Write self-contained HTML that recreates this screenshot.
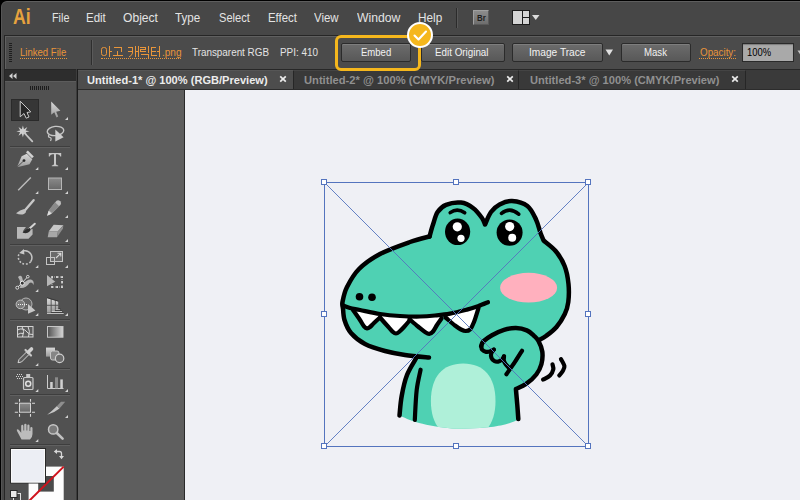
<!DOCTYPE html>
<html><head><meta charset="utf-8">
<style>
*{margin:0;padding:0;box-sizing:border-box}
html,body{width:800px;height:500px;overflow:hidden;background:#000}
body{font-family:"Liberation Sans",sans-serif;position:relative}
.a{position:absolute}
.t{position:absolute;white-space:nowrap;line-height:normal;transform-origin:0 0;display:block}
#win{position:absolute;left:1px;top:1px;width:799px;height:499px;background:#474747;border-top-left-radius:6px;border-top:1px solid #5e5e5e;border-left:1px solid #555}
#ctrl{position:absolute;left:4px;top:35px;width:796px;height:35px;background:#4b4b4b;border-top:1px solid #262626;border-left:1px solid #262626;box-shadow:inset 1px 1px 0 #606060}
.btn{position:absolute;top:43px;height:19px;border:1px solid #2b2b2b;border-radius:2px;background:linear-gradient(#6c6c6c,#585858);box-shadow:inset 0 1px 0 #7e7e7e}
.dot{position:absolute;height:0;border-top:1px dotted #e8953a}
#tabs{position:absolute;left:78px;top:69px;width:722px;height:21px;background:#3a3a3a;border-top:1px solid #272727;border-bottom:1px solid #2c2c2c}
.tab{position:absolute;top:70px;height:19px;border-right:1px solid #262626;background:#393939;border-top:1px solid #444}
#tools{position:absolute;left:4px;top:69px;width:72px;height:431px;background:#515151;border-left:1px solid #262626;border-top:1px solid #262626}
#thead{position:absolute;left:5px;top:70px;width:71px;height:12px;background:#2d2d2d;border-bottom:1px solid #5c5c5c}
#gutter{position:absolute;left:76px;top:69px;width:2px;height:431px;background:#3c3c3c;border-right:1px solid #1c1c1c}
#paste{position:absolute;left:78px;top:90px;width:107px;height:410px;background:#5e5e5e}
#art{position:absolute;left:184px;top:90px;width:616px;height:410px;background:#eff0f5;border-left:1px solid #2a2a2a}
.sep{position:absolute;left:10px;width:60px;height:2px;border-top:1px solid #3c3c3c;border-bottom:1px solid #626262}
.tri{position:absolute;width:0;height:0;border-left:3px solid transparent;border-top:3px solid transparent;border-right:0;border-bottom:0}
</style></head><body>
<div id="win"></div>
<!-- menu bar right icons -->
<div class="a" style="left:456px;top:8px;width:2px;height:20px;border-left:1px solid #2b2b2b;border-right:1px solid #585858"></div>
<div class="a" style="left:473px;top:10px;width:16px;height:15px;background:linear-gradient(#8c8c8c,#6e6e6e);border:1px solid #a0a0a0;border-right-color:#5a5a5a;border-bottom-color:#5a5a5a"></div>
<div class="a" style="left:512px;top:10px;width:18px;height:15px;background:#d4d4d4;border:1px solid #1c1c1c"></div>
<div class="a" style="left:522px;top:11px;width:1px;height:13px;background:#1c1c1c"></div>
<div class="a" style="left:523px;top:17px;width:6px;height:1px;background:#1c1c1c"></div>
<svg class="a" style="left:532px;top:15px" width="8" height="5"><path d="M0 0H7.5L3.75 5Z" fill="#dcdcdc"/></svg>

<div id="ctrl"></div>
<!-- gripper -->
<div class="a" style="left:9px;top:43px;width:3px;height:20px;background:repeating-linear-gradient(#1e1e1e 0 1px,transparent 1px 2px)"></div>
<div class="a" style="left:91px;top:40px;width:2px;height:25px;border-left:1px solid #2e2e2e;border-right:1px solid #5a5a5a"></div>
<div class="dot" style="left:20px;top:58px;width:47px"></div>
<div class="dot" style="left:101px;top:58px;width:80px"></div>
<div class="dot" style="left:699px;top:58px;width:37px"></div>
<!-- korean filename glyphs -->
<svg class="a" style="left:100px;top:45px" width="62" height="14" viewBox="100 45 62 14" shape-rendering="crispEdges" fill="none" stroke="#e8953a" stroke-width="1">
<rect x="101.5" y="47.5" width="5" height="8" rx="2" shape-rendering="auto"/>
<path d="M109.5 46V57M110 51.5H112"/>
<path d="M114 47.5H121.5V52M117.5 51V55.5M113 55.5H123"/>
<path d="M128 47.5H132.5V53M128 51.5H132.5M135.5 46V57M138.5 46V57M135.5 51.5H138.5"/>
<path d="M132.5 53Q132 55.5 129 57" shape-rendering="auto"/>
<path d="M140 47.5H145.5V49.5H140.5V51.5H146M148.5 46V53M141 54.5H148.5V58"/>
<path d="M156 47.5H151.5V55.5H156.5M151.5 51.5H156M159.5 46V57M157 51.5H159.5"/>
</svg>
<!-- buttons -->
<div class="btn" style="left:341px;width:70px"></div>
<div class="btn" style="left:421px;width:84px"></div>
<div class="btn" style="left:512px;width:91px"></div>
<div class="btn" style="left:621px;width:70px"></div>
<svg class="a" style="left:605px;top:49px" width="9" height="7"><path d="M0.5 0.5H8L4.25 6.5Z" fill="#e0e0e0"/></svg>
<div class="a" style="left:742px;top:43px;width:52px;height:19px;background:#a9a9a9;border:1px solid #2a2a2a;box-shadow:inset 0 1px 1px #7c7c7c"></div>
<svg class="a" style="left:797px;top:50px" width="3" height="6"><path d="M0.500 0.500H8L4.250 6Z" fill="#c4c4c4"/></svg>

<!-- tabs -->
<div id="tabs"></div>
<div class="tab" style="left:78px;width:216px;background:#4d4d4d;border-top-color:#565656"></div>
<div class="tab" style="left:294px;width:225px"></div>
<div class="tab" style="left:519px;width:227px"></div>
<svg class="a" style="left:279px;top:75px" width="9" height="9"><path d="M1.200 1.400L6.800 6.600M6.800 1.400L1.200 6.600" stroke="#ececec" stroke-width="1.700"/></svg>
<svg class="a" style="left:505.500px;top:75px" width="9" height="9"><path d="M1.200 1.400L6.800 6.600M6.800 1.400L1.200 6.600" stroke="#ececec" stroke-width="1.700"/></svg>
<svg class="a" style="left:731px;top:75px" width="9" height="9"><path d="M1.200 1.400L6.800 6.600M6.800 1.400L1.200 6.600" stroke="#ececec" stroke-width="1.700"/></svg>

<!-- highlight -->
<div class="a" style="left:335px;top:35px;width:85.500px;height:36px;border:3px solid #f5b71d;border-radius:6px"></div>
<div class="a" style="left:407px;top:22px;width:26px;height:26px;border-radius:50%;background:#f5b71d;border:2px solid #fff"></div>
<svg class="a" style="left:407px;top:22px" width="26" height="26"><path d="M7.5 13.5L11.5 17.5L19 9.5" fill="none" stroke="#fff" stroke-width="2.1" stroke-linecap="round" stroke-linejoin="round"/></svg>
<div id="tools"></div>
<div id="thead"></div>
<div id="gutter"></div>
<div id="paste"></div>
<div id="art"></div>
<svg class="a" style="left:0;top:0" width="800" height="500" viewBox="0 0 800 500">
<defs>
<linearGradient id="gv" x1="0" y1="0" x2="0" y2="1"><stop offset="0" stop-color="#8a8a8a"/><stop offset="1" stop-color="#686868"/></linearGradient>
<linearGradient id="gl" x1="0" y1="0" x2="0" y2="1"><stop offset="0" stop-color="#d8d8d8"/><stop offset="1" stop-color="#9c9c9c"/></linearGradient>
<linearGradient id="gh" x1="0" y1="0" x2="1" y2="0"><stop offset="0" stop-color="#505050"/><stop offset="1" stop-color="#d6d6d6"/></linearGradient>
</defs>
<!-- header arrows + gripper -->
<path d="M12.5 73L9 76L12.5 79ZM16.5 73L13 76L16.5 79Z" fill="#d0d0d0"/>
<path d="M30.5 86V90M32.5 86V90M34.5 86V90M36.5 86V90M38.5 86V90M40.5 86V90M42.5 86V90M44.5 86V90M46.5 86V90M48.5 86V90" stroke="#1c1c1c" stroke-width="1" shape-rendering="crispEdges"/>
<!-- selected tool bg -->
<rect x="11.5" y="99.500" width="27" height="21" fill="#363636" stroke="#2a2a2a"/>
<!-- corner triangles -->
<g fill="#d2d2d2">
<path d="M68 117V120H65Z"/>
<path d="M38.300 167V170H35.300Z"/><path d="M68 167V170H65Z"/>
<path d="M38.300 191V194H35.300Z"/><path d="M68 191V194H65Z"/>
<path d="M68 215V218H65Z"/>
<path d="M68 239V242H65Z"/>
<path d="M38.300 265V268H35.300Z"/><path d="M68 265V268H65Z"/>
<path d="M38.300 289V292H35.300Z"/>
<path d="M38.300 313V316H35.300Z"/><path d="M68 313V316H65Z"/>
<path d="M38.300 363V366H35.300Z"/>
<path d="M38.300 389V392H35.300Z"/><path d="M68 389V392H65Z"/>
<path d="M68 415V418H65Z"/>
<path d="M38.300 439V442H35.300Z"/>
</g>
<!-- separators -->
<g shape-rendering="crispEdges">
<path d="M10 146.500H70M10 244.500H70M10 319.500H70M10 368.500H70M10 394.500H70M10 444.500H70" stroke="#3e3e3e"/>
<path d="M10 147.500H70M10 245.500H70M10 320.500H70M10 369.500H70M10 395.500H70M10 445.500H70" stroke="#606060"/>
</g>
<!-- selection arrow -->
<path d="M20.200 101.200V116.800L24 113.500L26.200 118.200L29 117L27 112.500L30.800 111.800Z" fill="#262626" stroke="#cacaca" stroke-width="1" stroke-linejoin="miter"/>
<!-- direct selection -->
<path d="M51.200 101.600V114.800L54.300 112.300L56.500 117.400L58.200 116.600L56.200 111.700L60.400 110.800Z" fill="url(#gl)"/>
<!-- magic wand -->
<path d="M22.900 125.500L24 129.300L27.300 127L25.600 130.500L29.500 131.300L25.700 132.300L27.300 135.800L24 133.500L22.900 137.200L21.800 133.500L18.500 135.800L20.100 132.300L16.300 131.300L20.200 130.500L18.500 127L21.800 129.300Z" fill="#cfcfcf"/>
<path d="M24 132.500L32.300 141.300" stroke="#c4c4c4" stroke-width="1.800" stroke-linecap="round"/>
<!-- lasso -->
<ellipse cx="55.500" cy="131" rx="8.300" ry="4.600" fill="none" stroke="#c6c6c6" stroke-width="1.400" transform="rotate(-6 55.500 131)"/>
<path d="M49 134.500Q47.500 137 50 137.500Q52 138 50.500 141" fill="none" stroke="#c6c6c6" stroke-width="1.200"/>
<path d="M55.300 129.500V141.500L63.600 137.200Z" fill="#cdcdcd"/>
<!-- pen -->
<path d="M17 167.200L21.600 156.200L26.800 153.800L32.300 159.200L29.500 164.300Z" fill="url(#gl)"/>
<path d="M17 167.200L23.500 161" stroke="#3a3a3a" stroke-width="0.800"/>
<circle cx="24" cy="160.600" r="1.400" fill="#2a2a2a"/>
<path d="M27.800 150.400L33.800 156.400L32 158.300L26 152.200Z" fill="#d2d2d2"/>
<!-- type T -->
<path d="M48.800 153H61.200V156.600H60.300Q60 154.400 57.500 154.300H56V164Q56 165.300 58.200 165.400V166.300H51.800V165.400Q54 165.300 54 164V154.300H52.500Q50 154.400 49.700 156.600H48.800Z" fill="#c6c6c6"/>
<!-- line -->
<path d="M18.200 190.200L30.800 177.400" stroke="#bcbcbc" stroke-width="1.400"/>
<!-- rect -->
<rect x="48.500" y="178" width="13" height="11.500" fill="url(#gv)" stroke="#b6b6b6" stroke-width="1"/>
<!-- brush -->
<path d="M33.600 200.200L24.800 210.500" stroke="#c8c8c8" stroke-width="2.400" stroke-linecap="round"/>
<path d="M24.200 209Q20 210 16 213.300Q20.500 215.500 24 214Q26.500 212.500 26 210.500Z" fill="#c2c2c2"/>
<!-- pencil -->
<path d="M56.500 200.700Q58.500 199.500 60.300 201.300Q61.800 203 60.600 204.800L51.500 213.800L47.200 215.700L48.500 211Z" fill="#bdbdbd"/>
<path d="M55 202.300L59.200 206.300L52.200 213.200L48.700 210.200Z" fill="#8a8a8a"/>
<path d="M47.200 215.700L48.500 211L51.500 213.800Z" fill="#dedede"/>
<!-- blob brush -->
<path d="M17 227H26L24 229.500Q22 232.500 24.500 233Q28 233 30.500 229.500L32.600 229V234.500L28.500 238.800H17Z" fill="#b8b8b8"/>
<path d="M34.800 223.700L28.500 229.500" stroke="#d4d4d4" stroke-width="2" stroke-linecap="round"/>
<path d="M29.500 228Q26 228.500 22.500 232.500Q26.500 234 29 232Q31 230.500 30.500 228.800Z" fill="#2e2e2e"/>
<!-- eraser -->
<path d="M53.700 224.800L63.400 225.300L58 231.300H48.800Z" fill="#c6c6c6"/>
<path d="M48.800 231.300H58L57 237.200H47.700Z" fill="#a8a8a8"/>
<path d="M58 231.300L63.400 225.300L62.900 228.800L57 237.200Z" fill="#8e8e8e"/>
<!-- rotate -->
<path d="M23.7 250.8A7.0 7.0 0 0 1 30.6 261.7" fill="none" stroke="#c4c4c4" stroke-width="1.500"/>
<path d="M30.6 261.7A7.0 7.0 0 0 1 19.2 253.7" fill="none" stroke="#c4c4c4" stroke-width="1.500" stroke-dasharray="1.800 1.700"/>
<path d="M19.200 252.900L23.900 249L24.400 254.400Z" fill="#c8c8c8"/>
<!-- scale -->
<rect x="50.500" y="251.500" width="12" height="10" fill="#6a6a6a" stroke="#c4c4c4"/>
<rect x="46.500" y="257.500" width="8" height="7" fill="none" stroke="#c4c4c4"/>
<path d="M56 258L60.500 253.600M57.500 253.300H60.800V256.600" fill="none" stroke="#d8d8d8" stroke-width="1.100"/>
<!-- warp / width -->
<path d="M18 277Q20.500 274.500 22 277Q23.500 281 23 284Q27 279 31 279.500Q34.500 280.500 33.500 285Q32 281.500 29.500 283Q26 288.500 20 288Q21.500 282.500 18 277Z" fill="#b4b4b4"/>
<path d="M17.300 287.700L28 276.500" stroke="#e0e0e0" stroke-width="1"/>
<circle cx="17.300" cy="287.700" r="1.500" fill="#444" stroke="#e6e6e6" stroke-width="0.900"/>
<circle cx="22.300" cy="283.200" r="2" fill="#333" stroke="#ececec" stroke-width="1"/>
<circle cx="27.800" cy="276.700" r="1.300" fill="#444" stroke="#e6e6e6" stroke-width="0.900"/>
<!-- free transform -->
<rect x="52" y="277" width="10" height="10" fill="none" stroke="#b8b8b8" stroke-width="1" stroke-dasharray="1 1"/>
<g fill="#ececec"><rect x="51.200" y="276.200" width="1.700" height="1.700"/><rect x="56.200" y="276.200" width="1.700" height="1.700"/><rect x="61.200" y="276.200" width="1.700" height="1.700"/><rect x="61.200" y="281.200" width="1.700" height="1.700"/><rect x="51.200" y="286.200" width="1.700" height="1.700"/><rect x="56.200" y="286.200" width="1.700" height="1.700"/><rect x="61.200" y="286.200" width="1.700" height="1.700"/></g>
<path d="M47 275V286.200L55.300 281.800Z" fill="#b6b6b6"/>
<!-- shape builder -->
<circle cx="26" cy="304" r="6" fill="#666" stroke="#b4b4b4" stroke-width="1"/>
<circle cx="20.400" cy="304.400" r="4.300" fill="#7a7a7a" stroke="#c0c0c0" stroke-width="1"/>
<path d="M18 304.500H27" stroke="#f0f0f0" stroke-width="1.200" stroke-dasharray="1 1"/>
<path d="M28 304V313.800L35.400 310.400Z" fill="#c8c8c8"/>
<!-- perspective grid -->
<path d="M47 298L50.700 299.200V312.500H47Z" fill="url(#gl)"/>
<path d="M51.600 299.500L54.900 300.500V311H51.600Z" fill="url(#gl)"/>
<path d="M55.700 300.800L58.200 301.600V309.300H55.700Z" fill="url(#gl)"/>
<path d="M46.500 305.300H58.500" stroke="#4c4c4c" stroke-width="0.900"/>
<path d="M47 297.700L58.500 301.200" stroke="#2e2e2e" stroke-width="0.800"/>
<path d="M55.700 309.700H60M51.600 311.500H62M47 313.400H63.700" stroke="#cdcdcd" stroke-width="1"/>
<path d="M58.500 308.700H60.500M55 310.600H62.300M51 312.500H63.700" stroke="#333" stroke-width="0.700"/>
<!-- mesh -->
<rect x="17.500" y="326.500" width="15.500" height="10.500" fill="#5c5c5c" stroke="#d2d2d2" stroke-width="1"/>
<path d="M17.500 330Q23 327 27 332Q29 335 33 334.500M22 326.500Q25 331 22.500 337M28 326.500Q30.500 331 28.500 337M17.500 334.500Q21 332.500 23.500 333.500" fill="none" stroke="#dadada" stroke-width="1"/>
<!-- gradient -->
<rect x="47.500" y="326.500" width="15.500" height="10.700" fill="url(#gh)" stroke="#c6c6c6" stroke-width="1"/>
<!-- eyedropper -->
<path d="M18 362.700L19 359.500L26.500 352L29 354.500L21.500 362Z" fill="#5a5a5a" stroke="#d4d4d4" stroke-width="1"/>
<path d="M25.500 350L31 355.500" stroke="#c8c8c8" stroke-width="2.200" stroke-linecap="round"/>
<path d="M28.500 352L31.500 349" stroke="#d0d0d0" stroke-width="3.600" stroke-linecap="round"/>
<!-- blend -->
<rect x="46" y="347.600" width="9" height="9" fill="url(#gl)"/>
<rect x="50.500" y="351" width="8.500" height="9" rx="2" fill="#868686" stroke="#c8c8c8" stroke-width="1"/>
<circle cx="59.600" cy="358.400" r="4.200" fill="#6c6c6c" stroke="#cecece" stroke-width="1.200"/>
<!-- symbol sprayer -->
<rect x="23.500" y="377.500" width="9.500" height="12" rx="1" fill="#5e5e5e" stroke="#c8c8c8" stroke-width="1.200"/>
<rect x="26.200" y="374" width="4" height="3" fill="#c8c8c8"/>
<circle cx="28.200" cy="383.800" r="2.500" fill="none" stroke="#e0e0e0" stroke-width="1.500"/>
<path d="M17 374.500H23M16 376.500H23M17 378.500H22" stroke="#d4d4d4" stroke-width="1" stroke-dasharray="1 1" shape-rendering="crispEdges"/>
<!-- graph -->
<path d="M47.500 375V388.500H63.500" fill="none" stroke="#cccccc" stroke-width="1"/>
<rect x="50.200" y="382" width="2.500" height="6" fill="#d0d0d0"/>
<rect x="55" y="377.300" width="3" height="11" fill="#8a8a8a"/>
<rect x="60.300" y="379.400" width="2.500" height="9" fill="#d0d0d0"/>
<!-- artboard -->
<rect x="19.500" y="403.200" width="11" height="9" fill="url(#gv)" stroke="#d4d4d4" stroke-width="1"/>
<path d="M19.500 399V401.800M30.500 399V401.800M19.500 414V416.800M30.500 414V416.800M14.800 403.200H18M14.800 412.200H18M32 403.200H35M32 412.200H35" stroke="#d8d8d8" stroke-width="1.100"/>
<!-- slice -->
<path d="M47.200 414.800Q52 411 57 406L59.500 408.500Q54 413 47.200 414.800Z" fill="#c6c6c6"/>
<path d="M57 406L61 401.800H65.200L59.500 408.500Z" fill="#8e8e8e"/>
<!-- hand -->
<path d="M21.500 439.500L17 431Q16.300 429.500 17.500 429.300Q18.700 429.300 19.800 431L21.200 432.800V426Q21.300 424.800 22.300 424.800Q23.300 424.800 23.400 426V430.500H24.200V424.800Q24.300 423.800 25.300 423.800Q26.400 423.800 26.500 424.800V430.500H27.300V425.600Q27.400 424.600 28.400 424.600Q29.400 424.600 29.500 425.600V431H30.300V428Q30.400 427 31.400 427Q32.400 427 32.500 428V434Q32.500 437 30 439.500Z" fill="#bcbcbc"/>
<!-- zoom -->
<circle cx="53.200" cy="429.400" r="4.700" fill="#7a7a7a" stroke="#c6c6c6" stroke-width="1.500"/>
<path d="M56.800 433L62.600 438.600" stroke="#c2c2c2" stroke-width="2.600" stroke-linecap="round"/>
<!-- swap arrows -->
<path d="M56 451.500H59.500Q61.500 451.500 61.500 453.500V456.500" fill="none" stroke="#d6d6d6" stroke-width="1.300"/>
<path d="M53.800 451.500L57 449V454ZM61.500 459.300L59 456H64Z" fill="#d6d6d6"/>
<!-- stroke box -->
<rect x="28.600" y="466.600" width="35.100" height="40" fill="#fdfdfd"/>
<rect x="38.200" y="476" width="15.600" height="15.600" fill="#4a4a4a"/>
<path d="M63.700 466.600L26 504" stroke="#d0121c" stroke-width="2"/>
<!-- fill box -->
<rect x="10.500" y="448.500" width="35" height="34.500" fill="#eceef4" stroke="#2a2a2a" stroke-width="1"/>
<rect x="11.500" y="449.500" width="33" height="32.500" fill="none" stroke="#fafafa" stroke-width="1"/>
<!-- default fill/stroke mini -->
<rect x="13.500" y="493.500" width="7" height="8" fill="#4a4a4a" stroke="#e0e0e0" stroke-width="1"/>
<rect x="10.500" y="490.500" width="6.500" height="7" fill="#e8e8e8" stroke="#2a2a2a" stroke-width="1"/>
</svg>

<svg class="a" style="left:0;top:0" width="800" height="500" viewBox="0 0 800 500">
<path d="M429.5 236.5C430.1 234.5 431.6 228.6 433.0 224.5C434.4 220.4 435.4 215.3 437.6 212.0C439.8 208.7 442.1 206.4 446.0 204.8C449.9 203.2 456.5 202.1 461.0 202.6C465.5 203.1 469.5 205.4 473.0 208.0C476.5 210.6 480.0 215.2 482.0 218.0C484.0 220.8 484.5 223.4 485.0 224.5C486.0 222.4 488.6 215.3 491.0 212.0C493.4 208.7 496.1 206.2 499.6 204.4C503.1 202.6 507.4 200.7 512.0 201.0C516.6 201.3 523.4 202.9 527.4 206.0C531.4 209.1 533.8 215.0 536.0 219.5C538.2 224.0 539.2 229.5 540.5 233.0C541.8 236.5 543.1 239.2 543.6 240.5C545.6 242.2 552.1 246.8 555.6 251.0C559.1 255.2 562.5 260.5 564.6 266.0C566.8 271.5 567.9 278.0 568.5 284.0C569.1 290.0 568.9 297.0 568.3 302.0C567.7 307.0 566.8 309.8 564.8 314.0C562.8 318.2 559.6 323.3 556.5 327.0C553.4 330.7 548.8 333.9 546.0 336.0C543.2 338.1 540.8 339.1 539.7 339.7L538 340.500C539.1 342.8 541.8 347.7 542.3 351.6C542.8 355.5 542.4 360.5 541.4 364.3C540.4 368.1 538.8 371.2 536.3 374.5C533.8 377.8 529.5 381.5 526.1 383.9C522.7 386.3 517.6 388.1 515.9 389.0C516.1 391.7 516.9 400.0 517.3 405.0C517.7 410.0 518.1 416.7 518.3 419.0C516.1 420.8 510.6 423.2 505.0 424.5C499.4 425.8 493.8 426.9 485.0 427.6C476.2 428.3 463.0 429.3 452.0 428.5C441.0 427.7 427.8 425.2 419.0 423.0C410.2 420.8 402.8 416.8 399.5 415.5C399.9 412.2 400.4 402.8 401.7 396.0C402.9 389.2 404.6 381.2 407.0 375.0C409.4 368.8 414.5 361.2 416.0 358.5L429 357.600C425.0 357.2 412.3 356.1 405.0 355.0C397.7 353.9 391.7 352.8 385.0 351.0C378.3 349.2 370.7 347.0 365.0 344.0C359.3 341.0 354.4 337.0 351.0 333.0C347.6 329.0 345.8 324.2 344.5 320.0C343.2 315.8 343.2 310.0 343.0 308.0C342.9 307.0 341.8 305.5 342.5 302.0C343.2 298.5 344.2 292.5 347.0 287.0C349.8 281.5 353.5 274.5 359.0 269.0C364.5 263.5 371.5 258.5 380.0 254.0C388.5 249.5 401.8 244.9 410.0 242.0C418.2 239.1 426.2 237.4 429.5 236.5Z" fill="#4fd1b3"/>
<clipPath id="bc"><path d="M429.5 236.5C430.1 234.5 431.6 228.6 433.0 224.5C434.4 220.4 435.4 215.3 437.6 212.0C439.8 208.7 442.1 206.4 446.0 204.8C449.9 203.2 456.5 202.1 461.0 202.6C465.5 203.1 469.5 205.4 473.0 208.0C476.5 210.6 480.0 215.2 482.0 218.0C484.0 220.8 484.5 223.4 485.0 224.5C486.0 222.4 488.6 215.3 491.0 212.0C493.4 208.7 496.1 206.2 499.6 204.4C503.1 202.6 507.4 200.7 512.0 201.0C516.6 201.3 523.4 202.9 527.4 206.0C531.4 209.1 533.8 215.0 536.0 219.5C538.2 224.0 539.2 229.5 540.5 233.0C541.8 236.5 543.1 239.2 543.6 240.5C545.6 242.2 552.1 246.8 555.6 251.0C559.1 255.2 562.5 260.5 564.6 266.0C566.8 271.5 567.9 278.0 568.5 284.0C569.1 290.0 568.9 297.0 568.3 302.0C567.7 307.0 566.8 309.8 564.8 314.0C562.8 318.2 559.6 323.3 556.5 327.0C553.4 330.7 548.8 333.9 546.0 336.0C543.2 338.1 540.8 339.1 539.7 339.7L538 340.500C539.1 342.8 541.8 347.7 542.3 351.6C542.8 355.5 542.4 360.5 541.4 364.3C540.4 368.1 538.8 371.2 536.3 374.5C533.8 377.8 529.5 381.5 526.1 383.9C522.7 386.3 517.6 388.1 515.9 389.0C516.1 391.7 516.9 400.0 517.3 405.0C517.7 410.0 518.1 416.7 518.3 419.0C516.1 420.8 510.6 423.2 505.0 424.5C499.4 425.8 493.8 426.9 485.0 427.6C476.2 428.3 463.0 429.3 452.0 428.5C441.0 427.7 427.8 425.2 419.0 423.0C410.2 420.8 402.8 416.8 399.5 415.5C399.9 412.2 400.4 402.8 401.7 396.0C402.9 389.2 404.6 381.2 407.0 375.0C409.4 368.8 414.5 361.2 416.0 358.5L429 357.600C425.0 357.2 412.3 356.1 405.0 355.0C397.7 353.9 391.7 352.8 385.0 351.0C378.3 349.2 370.7 347.0 365.0 344.0C359.3 341.0 354.4 337.0 351.0 333.0C347.6 329.0 345.8 324.2 344.5 320.0C343.2 315.8 343.2 310.0 343.0 308.0C342.9 307.0 341.8 305.5 342.5 302.0C343.2 298.5 344.2 292.5 347.0 287.0C349.8 281.5 353.5 274.5 359.0 269.0C364.5 263.5 371.5 258.5 380.0 254.0C388.5 249.5 401.8 244.9 410.0 242.0C418.2 239.1 426.2 237.4 429.5 236.5Z"/></clipPath>
<path d="M463.2 363.5C483.9 363.5 495.5 377.0 495.5 401C495.5 425.0 483.9 438.5 463.2 438.5C442.5 438.5 430.9 425.0 430.9 401C430.9 377.0 442.5 363.5 463.2 363.5Z" fill="#aff0d9" clip-path="url(#bc)"/>
<ellipse cx="528.600" cy="287.700" rx="28.500" ry="14.900" fill="#ffb0be"/>
<path d="M353.0 310.0C354.2 311.7 358.2 317.3 360.0 320.0C361.8 322.7 362.8 324.9 364.0 326.3C365.2 327.7 366.0 328.2 367.0 328.3C368.0 328.4 368.8 327.9 370.0 327.0C371.2 326.1 372.3 324.6 374.0 323.0C375.7 321.4 379.0 318.4 380.0 317.5L380 314.5L353 307Z" fill="#fff"/>
<path d="M380.0 317.5C381.3 319.0 385.8 324.1 388.0 326.5C390.2 328.9 391.7 330.8 393.0 332.0C394.3 333.2 395.0 333.5 396.0 333.5C397.0 333.5 397.7 333.1 399.0 332.0C400.3 330.9 402.2 329.0 404.0 327.0C405.8 325.0 409.0 321.2 410.0 320.0L410 317L380 314.5Z" fill="#fff"/>
<path d="M409.5 319.2C410.9 320.4 415.4 324.4 418.0 326.5C420.6 328.6 423.1 330.8 425.0 332.0C426.9 333.2 427.9 333.9 429.2 333.8C430.5 333.7 431.7 333.0 433.0 331.5C434.3 330.0 435.6 327.2 437.0 325.0C438.4 322.8 440.8 319.6 441.5 318.5L441.5 315.5L409.5 316.2Z" fill="#fff"/>
<path d="M445.5 317.5C447.1 318.8 452.4 323.5 455.0 325.5C457.6 327.5 459.2 328.6 461.0 329.5C462.8 330.4 464.2 331.0 465.7 331.0C467.2 331.0 468.6 331.0 470.0 329.5C471.4 328.0 472.6 325.6 474.0 322.0C475.4 318.4 477.8 310.3 478.5 308.0L478.5 305L445.5 314.5Z" fill="#fff"/>
<g fill="none" stroke="#000" stroke-linecap="round" stroke-linejoin="round" stroke-width="4.500">
<path d="M429.5 236.5C430.1 234.5 431.6 228.6 433.0 224.5C434.4 220.4 435.4 215.3 437.6 212.0C439.8 208.7 442.1 206.4 446.0 204.8C449.9 203.2 456.5 202.1 461.0 202.6C465.5 203.1 469.5 205.4 473.0 208.0C476.5 210.6 480.0 215.2 482.0 218.0C484.0 220.8 484.5 223.4 485.0 224.5C486.0 222.4 488.6 215.3 491.0 212.0C493.4 208.7 496.1 206.2 499.6 204.4C503.1 202.6 507.4 200.7 512.0 201.0C516.6 201.3 523.4 202.9 527.4 206.0C531.4 209.1 533.8 215.0 536.0 219.5C538.2 224.0 539.2 229.5 540.5 233.0C541.8 236.5 543.1 239.2 543.6 240.5C545.6 242.2 552.1 246.8 555.6 251.0C559.1 255.2 562.5 260.5 564.6 266.0C566.8 271.5 567.9 278.0 568.5 284.0C569.1 290.0 568.9 297.0 568.3 302.0C567.7 307.0 566.8 309.8 564.8 314.0C562.8 318.2 559.6 323.3 556.5 327.0C553.4 330.7 548.8 333.9 546.0 336.0C543.2 338.1 540.8 339.1 539.7 339.7"/>
<path d="M343.0 308.0C342.9 307.0 341.8 305.5 342.5 302.0C343.2 298.5 344.2 292.5 347.0 287.0C349.8 281.5 353.5 274.5 359.0 269.0C364.5 263.5 371.5 258.5 380.0 254.0C388.5 249.5 401.8 244.9 410.0 242.0C418.2 239.1 426.2 237.4 429.5 236.5"/>
<path d="M343.0 308.0C343.2 310.0 343.2 315.8 344.5 320.0C345.8 324.2 347.6 329.0 351.0 333.0C354.4 337.0 359.3 341.0 365.0 344.0C370.7 347.0 378.3 349.2 385.0 351.0C391.7 352.8 397.7 353.9 405.0 355.0C412.3 356.1 425.0 357.2 429.0 357.6"/>
<path d="M481.2 346.0C481.6 345.2 481.8 343.0 483.6 341.2C485.4 339.4 488.6 337.1 492.0 335.2C495.4 333.3 500.0 331.0 504.0 329.8C508.0 328.6 512.2 327.9 516.0 328.0C519.8 328.1 523.8 329.1 526.8 330.4C529.8 331.7 532.0 334.0 534.0 335.8C536.0 337.6 537.1 338.4 538.5 341.0C539.9 343.6 541.8 347.7 542.3 351.6C542.8 355.5 542.4 360.5 541.4 364.3C540.4 368.1 538.8 371.2 536.3 374.5C533.8 377.8 529.5 381.5 526.1 383.9C522.7 386.3 517.6 388.1 515.9 389.0C516.1 391.7 516.9 400.0 517.3 405.0C517.7 410.0 518.1 416.7 518.3 419.0"/>
<path d="M416.0 358.5C414.5 361.2 409.4 368.8 407.0 375.0C404.6 381.2 402.9 389.2 401.7 396.0C400.4 402.8 399.9 412.2 399.5 415.5"/>
</g>
<g fill="none" stroke="#000" stroke-linecap="round" stroke-linejoin="round" stroke-width="4.200">
<path d="M420.6 369.7C420.0 373.1 417.7 381.6 416.7 390.0C415.7 398.4 415.1 415.0 414.8 420.0"/>
<path d="M343.5 305.5C344.6 305.9 347.2 307.2 350.0 308.0C352.8 308.8 355.0 309.0 360.0 310.0C365.0 311.0 373.3 313.0 380.0 314.0C386.7 315.0 393.3 315.6 400.0 316.0C406.7 316.4 414.2 316.6 420.0 316.5C425.8 316.4 430.0 316.0 435.0 315.5C440.0 315.0 444.7 314.6 450.0 313.6C455.3 312.6 462.3 310.8 467.0 309.6C471.7 308.4 474.5 307.4 478.0 306.2C481.5 305.0 486.3 302.9 488.0 302.2"/>
<path d="M353.0 310.0C354.2 311.7 358.2 317.3 360.0 320.0C361.8 322.7 362.8 324.9 364.0 326.3C365.2 327.7 366.0 328.2 367.0 328.3C368.0 328.4 368.8 327.9 370.0 327.0C371.2 326.1 372.3 324.6 374.0 323.0C375.7 321.4 379.0 318.4 380.0 317.5"/>
<path d="M380.0 317.5C381.3 319.0 385.8 324.1 388.0 326.5C390.2 328.9 391.7 330.8 393.0 332.0C394.3 333.2 395.0 333.5 396.0 333.5C397.0 333.5 397.7 333.1 399.0 332.0C400.3 330.9 402.2 329.0 404.0 327.0C405.8 325.0 409.0 321.2 410.0 320.0"/>
<path d="M409.5 319.2C410.9 320.4 415.4 324.4 418.0 326.5C420.6 328.6 423.1 330.8 425.0 332.0C426.9 333.2 427.9 333.9 429.2 333.8C430.5 333.7 431.7 333.0 433.0 331.5C434.3 330.0 435.6 327.2 437.0 325.0C438.4 322.8 440.8 319.6 441.5 318.5"/>
<path d="M445.5 317.5C447.1 318.8 452.4 323.5 455.0 325.5C457.6 327.5 459.2 328.6 461.0 329.5C462.8 330.4 464.2 331.0 465.7 331.0C467.2 331.0 468.6 331.0 470.0 329.5C471.4 328.0 472.6 325.6 474.0 322.0C475.4 318.4 477.8 310.3 478.5 308.0"/>
<path d="M481.2 346.0C481.4 346.6 481.4 348.8 482.2 349.8C483.0 350.8 484.6 351.6 486.0 351.8C487.4 352.1 489.2 351.7 490.5 351.3C491.8 350.9 493.2 349.9 493.8 349.6"/>
<path d="M493.8 349.6C493.4 350.2 491.6 352.1 491.2 353.5C490.8 354.9 491.0 356.8 491.5 358.0C492.0 359.2 493.2 360.4 494.3 361.0C495.4 361.6 496.9 361.9 498.2 361.6C499.5 361.4 501.0 360.4 502.0 359.5C503.0 358.6 503.7 356.9 504.0 356.4"/>
<path d="M504.0 356.4C504.0 357.1 503.6 359.2 503.8 360.5C504.1 361.8 504.6 362.8 505.5 364.0C506.4 365.2 508.4 367.3 509.0 368.0"/>
<path d="M522.0 350.8C520.8 352.7 517.4 358.3 514.8 362.2C512.2 366.1 507.8 372.2 506.4 374.2"/>
<path d="M552.5 364.3C552.6 365.1 553.7 367.5 553.3 369.4C552.9 371.2 551.7 373.7 550.0 375.4C548.3 377.1 544.2 378.9 543.1 379.6"/>
<path d="M561.0 359.2C561.6 360.3 564.1 364.0 564.4 366.0C564.7 368.0 563.6 369.5 562.7 371.1C561.9 372.7 559.9 374.7 559.3 375.4"/>
</g>
<g fill="none" stroke="#000" stroke-linecap="round" stroke-linejoin="round" stroke-width="3.600">
<path d="M450.200 212.600Q457.300 207.600 464.700 212.800"/>
<path d="M501.500 213.400Q510 206.500 518.700 214.200"/>
</g>
<ellipse cx="457.600" cy="231.800" rx="12.600" ry="13.300" fill="#000"/>
<ellipse cx="509.600" cy="232.600" rx="13" ry="13.200" fill="#000"/>
<circle cx="457.300" cy="226.800" r="4.600" fill="#fff"/><circle cx="461" cy="238.300" r="3.600" fill="#fff"/>
<circle cx="509.700" cy="226.600" r="4.600" fill="#fff"/><circle cx="512.200" cy="237.800" r="4" fill="#fff"/>
<circle cx="359.500" cy="296.800" r="3.800" fill="#000"/><circle cx="372" cy="297.200" r="3.800" fill="#000"/>
<g stroke="#5474be" stroke-width="1" fill="none">
<path d="M324.500 182.500L588.500 446.500M588.500 182.500L324.500 446.500" stroke-width="0.900"/>
<rect x="324.500" y="182.500" width="264" height="264" shape-rendering="crispEdges"/>
</g>
<g stroke="#5474be" stroke-width="1" fill="#fff" shape-rendering="crispEdges">
<rect x="321.5" y="179.5" width="5" height="5"/>
<rect x="321.5" y="311.5" width="5" height="5"/>
<rect x="321.5" y="443.5" width="5" height="5"/>
<rect x="453.5" y="179.5" width="5" height="5"/>
<rect x="453.5" y="443.5" width="5" height="5"/>
<rect x="585.5" y="179.5" width="5" height="5"/>
<rect x="585.5" y="311.5" width="5" height="5"/>
<rect x="585.5" y="443.5" width="5" height="5"/>
</g>
</svg>
<span class="t" style="left:12.8px;top:3.9px;font-size:22.2px;font-weight:bold;color:#e6a23e;transform:scaleX(0.8)">Ai</span>
<span class="t" id="t0" style="left:51.5px;top:10.69px;font-size:12.5px;font-weight:normal;color:#e4e4e4;transform:scaleX(0.8633);">File</span>
<span class="t" id="t1" style="left:86.2px;top:10.69px;font-size:12.5px;font-weight:normal;color:#e4e4e4;transform:scaleX(0.9189);">Edit</span>
<span class="t" id="t2" style="left:123.3px;top:10.69px;font-size:12.5px;font-weight:normal;color:#e4e4e4;transform:scaleX(0.9684);">Object</span>
<span class="t" id="t3" style="left:174.8px;top:10.69px;font-size:12.5px;font-weight:normal;color:#e4e4e4;transform:scaleX(0.9296);">Type</span>
<span class="t" id="t4" style="left:218.8px;top:10.69px;font-size:12.5px;font-weight:normal;color:#e4e4e4;transform:scaleX(0.8863);">Select</span>
<span class="t" id="t5" style="left:267.9px;top:10.69px;font-size:12.5px;font-weight:normal;color:#e4e4e4;transform:scaleX(0.9107);">Effect</span>
<span class="t" id="t6" style="left:314px;top:10.69px;font-size:12.5px;font-weight:normal;color:#e4e4e4;transform:scaleX(0.9153);">View</span>
<span class="t" id="t7" style="left:357.3px;top:10.69px;font-size:12.5px;font-weight:normal;color:#e4e4e4;transform:scaleX(0.9760);">Window</span>
<span class="t" id="t8" style="left:418.3px;top:10.69px;font-size:12.5px;font-weight:normal;color:#e4e4e4;transform:scaleX(0.9409);">Help</span>
<span class="t" id="t9" style="left:20.3px;top:46.65px;font-size:10px;font-weight:normal;color:#e8953a;transform:scaleX(0.9553);">Linked File</span>
<span class="t" id="t10" style="left:192px;top:46.65px;font-size:10px;font-weight:normal;color:#e4e4e4;transform:scaleX(0.9872);">Transparent RGB</span>
<span class="t" id="t11" style="left:280px;top:46.65px;font-size:10px;font-weight:normal;color:#e4e4e4;transform:scaleX(0.9906);">PPI: 410</span>
<span class="t" id="t12" style="left:360.5px;top:46.65px;font-size:10px;font-weight:normal;color:#f2f2f2;transform:scaleX(0.9531);">Embed</span>
<span class="t" id="t13" style="left:434.5px;top:46.65px;font-size:10px;font-weight:normal;color:#f2f2f2;transform:scaleX(0.9822);">Edit Original</span>
<span class="t" id="t14" style="left:529px;top:46.65px;font-size:10px;font-weight:normal;color:#f2f2f2;transform:scaleX(1.0163);">Image Trace</span>
<span class="t" id="t15" style="left:644px;top:46.65px;font-size:10px;font-weight:normal;color:#f2f2f2;transform:scaleX(0.9621);">Mask</span>
<span class="t" id="t16" style="left:699.5px;top:46.65px;font-size:10px;font-weight:normal;color:#e8953a;transform:scaleX(0.9813);">Opacity:</span>
<span class="t" id="t17" style="left:746.5px;top:46.65px;font-size:10px;font-weight:normal;color:#000;transform:scaleX(0.9383);">100%</span>
<span class="t" id="t18" style="left:161.5px;top:46.85px;font-size:10px;font-weight:normal;color:#e8953a;transform:scaleX(1.0016);">.png</span>
<span class="t" id="t19" style="left:87.4px;top:74.05px;font-size:11px;font-weight:bold;color:#ececec;transform:scaleX(1.0065);">Untitled-1* @ 100% (RGB/Preview)</span>
<span class="t" id="t20" style="left:303.6px;top:74.05px;font-size:11px;font-weight:bold;color:#909090;transform:scaleX(1.0161);">Untitled-2* @ 100% (CMYK/Preview)</span>
<span class="t" id="t21" style="left:530px;top:74.05px;font-size:11px;font-weight:bold;color:#909090;transform:scaleX(1.0107);">Untitled-3* @ 100% (CMYK/Preview)</span>
<span class="t" id="t22" style="left:477.3px;top:12.64px;font-size:8.8px;font-weight:bold;color:#1e1e1e;transform:scaleX(0.8895);">Br</span>
</body></html>
